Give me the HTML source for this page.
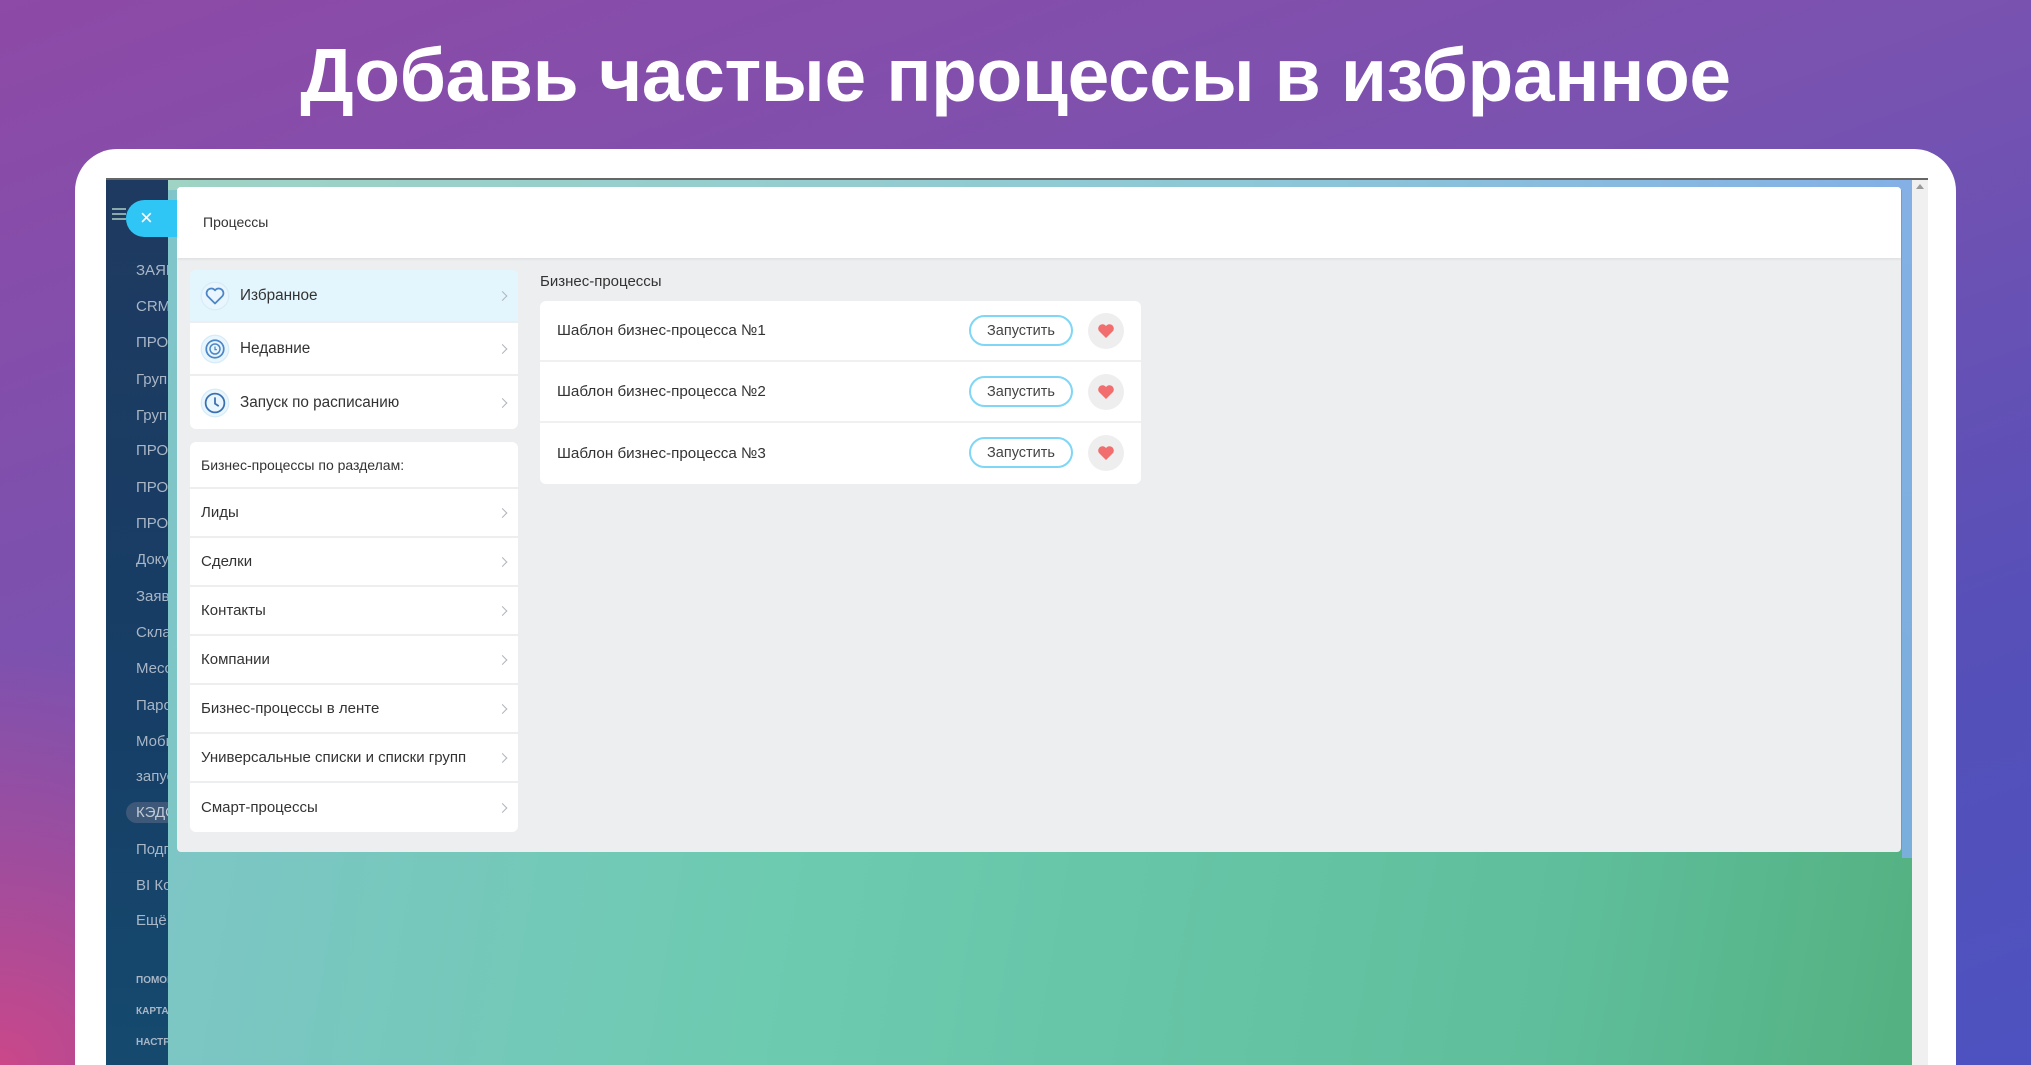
<!DOCTYPE html>
<html><head><meta charset="utf-8"><style>
*{margin:0;padding:0;box-sizing:border-box}
html,body{width:2031px;height:1065px;overflow:hidden}
body{position:relative;font-family:"Liberation Sans","Noto Sans CJK SC",sans-serif;
background:linear-gradient(160deg,#8d4aa6 0%,#7a52b0 40%,#5650b8 75%,#4d52c0 100%);}
.bgpink{position:absolute;inset:0;background:radial-gradient(ellipse 700px 600px at 0% 100%,rgba(220,70,130,.85),rgba(220,70,130,0) 70%);}
.title{position:absolute;left:0;width:2031px;top:32px;text-align:center;color:#fff;font-weight:bold;font-size:75px;letter-spacing:-0.4px}
.frame{position:absolute;left:75px;top:149px;width:1881px;height:916px;background:#fff;border-radius:42px 42px 0 0}
.screen{position:absolute;left:106px;top:178px;width:1822px;height:887px;border-top:2px solid #666;overflow:hidden;
background:linear-gradient(100deg,#82c4cc 0%,#6dcbb0 40%,#5fbf9c 80%,#53b07f 100%)}
.topstrip{position:absolute;left:62px;top:0;right:16px;height:10px;background:linear-gradient(90deg,#9fd3c4,#8ec8d6 60%,#84b0e6)}
.rightstrip{position:absolute;left:1796px;top:0;width:10px;height:678px;background:linear-gradient(180deg,#84b0e6,#7aaedb)}
.side{position:absolute;left:0;top:0;width:62px;height:887px;background:linear-gradient(180deg,#1f3a60,#163e66 60%,#154a6e);overflow:hidden}
.side div{position:absolute;left:30px;color:#a9b6c6;font-size:15px;white-space:nowrap}
.side .s{font-size:10px;font-weight:bold}
.scroll{position:absolute;right:0;top:0;width:16px;height:887px;background:#f0f0f0}
.scroll:after{content:"";position:absolute;left:4px;top:4px;border:4px solid transparent;border-bottom:5px solid #999;border-top:0}
.pill{position:absolute;left:20px;top:20px;width:80px;height:37px;border-radius:19px;background:#2fc6f6;color:#fff;font-size:22px;line-height:35px;padding-left:14px}
.ham{position:absolute;left:6px;top:28px;width:14px;height:2px;background:#8aa;box-shadow:0 5px #8aa,0 10px #8aa}
.panel{position:absolute;left:71px;top:7px;width:1724px;height:665px;background:#edeef0;border-radius:4px;overflow:hidden}
.head{height:71px;background:#fff;box-shadow:0 1px 3px rgba(0,0,0,.08);padding:27px 26px;font-size:14px;color:#333}
.card{position:absolute;left:13px;width:328px;background:#fff;border-radius:6px;overflow:hidden}
.it{position:relative;height:53px;border-bottom:2px solid #edeef0;display:flex;align-items:center;font-size:15.3px;color:#333;padding-left:10px}
.it svg{margin-right:10px}
.chev:after,.it:after{content:"";position:absolute;right:12px;top:50%;width:6px;height:6px;border-right:1.3px solid #b0b5ba;border-top:1.3px solid #b0b5ba;transform:translateY(-50%) rotate(45deg)}
.sec{height:49px;border-bottom:2px solid #edeef0;display:flex;align-items:center;padding-left:11px;font-size:15px;color:#333;position:relative}
.lbl{position:absolute;left:363px;top:86px;font-size:15px;color:#333}
.list{position:absolute;left:363px;top:114px;width:601px;background:#fff;border-radius:6px}
.row{height:61px;border-bottom:2px solid #eef0f2;display:flex;align-items:center;padding-left:17px;font-size:15.2px;color:#333;position:relative}
.row:last-child{border:0}
.btn{position:absolute;left:429px;top:14px;width:104px;height:31px;border:2px solid #7fd6f5;border-radius:16px;display:flex;align-items:center;justify-content:center;font-size:14.5px;color:#444}
.hrt{position:absolute;left:548px;top:12px;width:36px;height:36px;border-radius:50%;background:#eeeeee;display:flex;align-items:center;justify-content:center}
</style></head><body>
<div class="bgpink"></div>
<div class="title">Добавь частые процессы в избранное</div>
<div class="frame"></div>
<div class="screen">
 <div class="topstrip"></div><div class="rightstrip"></div>
 <div class="side">
  <div style="top:82px">ЗАЯВКИ</div><div style="top:118px">CRM</div><div style="top:154px">ПРОЕКТЫ</div><div style="top:191px">Группы</div><div style="top:227px">Группы</div><div style="top:262px">ПРОЦЕССЫ</div><div style="top:299px">ПРОЦЕССЫ</div><div style="top:335px">ПРОЦЕССЫ</div><div style="top:371px">Документы</div><div style="top:408px">Заявки</div><div style="top:444px">Склад</div><div style="top:480px">Месс</div><div style="top:517px">Пароли</div><div style="top:553px">Мобил</div><div style="top:588px">запуск</div>
  <div style="top:622px;left:20px;background:#3d5878;border-radius:12px;padding:2px 10px;color:#c0cad6">КЭДО</div>
  <div style="top:661px">Подп</div><div style="top:697px">BI Ко</div><div style="top:732px">Ещё</div>
  <div class="s" style="top:795px">ПОМОЩЬ</div><div class="s" style="top:826px">КАРТА</div><div class="s" style="top:857px">НАСТР</div>
 </div>
 <div class="ham"></div>
 <div class="pill">×</div>
 <div class="scroll"></div>
 <div class="panel">
  <div class="head">Процессы</div>
  <div class="card" style="top:83px">
   <div class="it" style="background:#e3f6fd"><svg width="30" height="30" viewBox="0 0 24 24"><circle cx="12" cy="12" r="11" fill="#eaf6fd" stroke="#d6ecf8"/><path d="M12 18 L6 12 A3.3 3.3 0 0 1 12 7.5 A3.3 3.3 0 0 1 18 12 Z" fill="none" stroke="#4a86c8" stroke-width="1.4" stroke-linejoin="round"/></svg>Избранное</div>
   <div class="it"><svg width="30" height="30" viewBox="0 0 24 24"><circle cx="12" cy="12" r="11" fill="#eaf6fd" stroke="#d6ecf8"/><circle cx="12" cy="12" r="7" fill="none" stroke="#4a86c8" stroke-width="1.4"/><circle cx="12" cy="12" r="4" fill="none" stroke="#4a86c8" stroke-width="1.2"/><path d="M12 10v2.5h1.5" stroke="#4a86c8" fill="none"/></svg>Недавние</div>
   <div class="it" style="border:0"><svg width="30" height="30" viewBox="0 0 24 24"><circle cx="12" cy="12" r="11" fill="#eaf6fd" stroke="#d6ecf8"/><circle cx="12" cy="12" r="7.5" fill="none" stroke="#3a6fb0" stroke-width="1.4"/><path d="M12 7.5v5l3 2" stroke="#3a6fb0" stroke-width="1.4" fill="none"/></svg>Запуск по расписанию</div>
  </div>
  <div class="card" style="top:255px">
   <div class="sec" style="height:47px;font-size:14px">Бизнес-процессы по разделам:</div>
   <div class="sec chev">Лиды</div><div class="sec chev">Сделки</div><div class="sec chev">Контакты</div><div class="sec chev">Компании</div><div class="sec chev">Бизнес-процессы в ленте</div><div class="sec chev">Универсальные списки и списки групп</div><div class="sec chev" style="border:0">Смарт-процессы</div>
  </div>
  <div class="lbl">Бизнес-процессы</div>
  <div class="list">
   <div class="row">Шаблон бизнес-процесса №1<span class="btn">Запустить</span><span class="hrt"><svg width="18" height="16" viewBox="0 0 18 16"><path d="M9 15 L2 8 A3.8 3.8 0 0 1 9 3 A3.8 3.8 0 0 1 16 8 Z" fill="#f26d6d"/></svg></span></div>
   <div class="row">Шаблон бизнес-процесса №2<span class="btn">Запустить</span><span class="hrt"><svg width="18" height="16" viewBox="0 0 18 16"><path d="M9 15 L2 8 A3.8 3.8 0 0 1 9 3 A3.8 3.8 0 0 1 16 8 Z" fill="#f26d6d"/></svg></span></div>
   <div class="row">Шаблон бизнес-процесса №3<span class="btn">Запустить</span><span class="hrt"><svg width="18" height="16" viewBox="0 0 18 16"><path d="M9 15 L2 8 A3.8 3.8 0 0 1 9 3 A3.8 3.8 0 0 1 16 8 Z" fill="#f26d6d"/></svg></span></div>
  </div>
 </div>
</div>
</body></html>
